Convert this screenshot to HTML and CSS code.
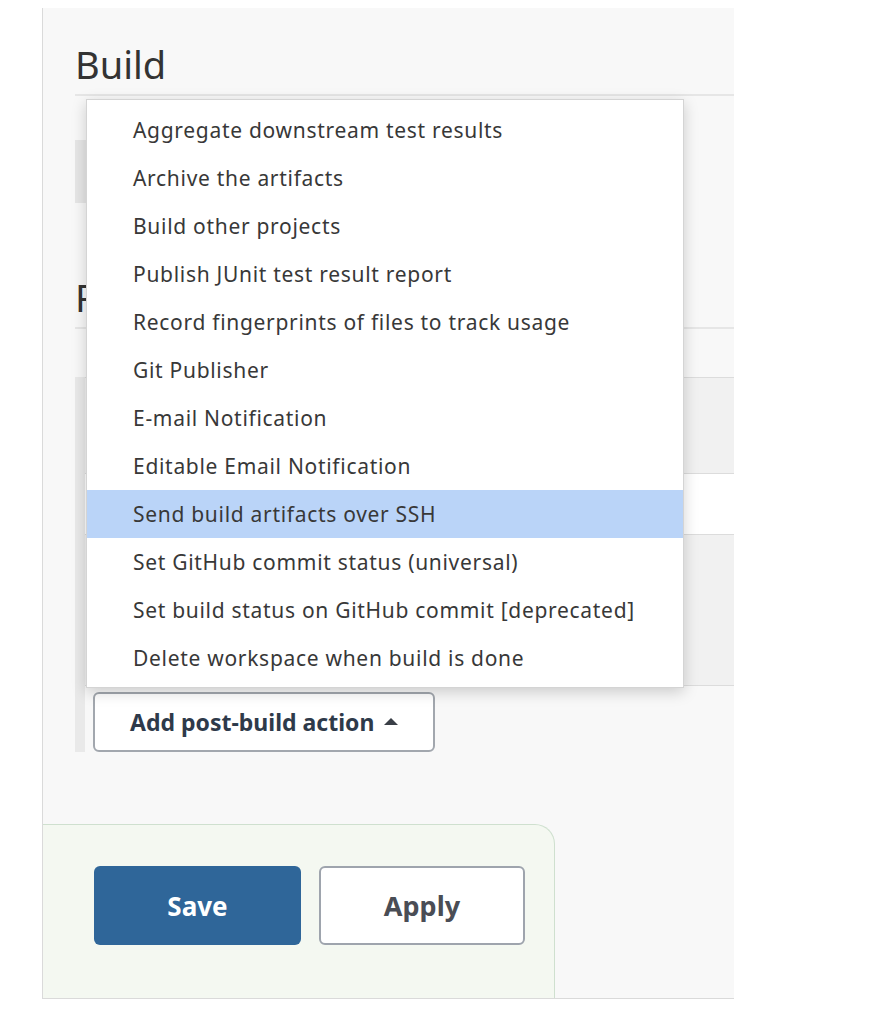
FILE: index.html
```html
<!DOCTYPE html>
<html lang="en">
<head>
<meta charset="utf-8">
<title>Configure</title>
<link rel="stylesheet" href="styles.css">
</head>
<body>
<div class="panel">
  <div class="content">
    <h2 class="section-title">Build</h2>
    <div class="build-step"></div>
    <h2 class="section-title post-title">Post-build Actions</h2>
    <div class="step-group">
      <div class="step-body">
        <div class="step-box">
          <div class="step-head"></div>
          <div class="step-field"></div>
          <div class="step-rest"></div>
        </div>
        <button class="add-btn" type="button">Add post-build action <span class="caret"></span></button>
      </div>
    </div>
  </div>

  <ul class="menu">
    <li class="menu-item">Aggregate downstream test results</li>
    <li class="menu-item">Archive the artifacts</li>
    <li class="menu-item">Build other projects</li>
    <li class="menu-item">Publish JUnit test result report</li>
    <li class="menu-item">Record fingerprints of files to track usage</li>
    <li class="menu-item">Git Publisher</li>
    <li class="menu-item">E-mail Notification</li>
    <li class="menu-item">Editable Email Notification</li>
    <li class="menu-item active">Send build artifacts over SSH</li>
    <li class="menu-item">Set GitHub commit status (universal)</li>
    <li class="menu-item">Set build status on GitHub commit [deprecated]</li>
    <li class="menu-item">Delete workspace when build is done</li>
  </ul>

  <div class="bottom-bar">
    <button class="btn btn-primary" type="button">Save</button>
    <button class="btn btn-secondary" type="button">Apply</button>
  </div>
</div>
</body>
</html>
```

FILE: styles.css
```css
html, body {
  margin: 0;
  padding: 0;
  background: #ffffff;
}

body {
  font-family: "Noto Sans", "Open Sans", sans-serif;
  color: #333333;
}

.panel {
  position: relative;
  box-sizing: border-box;
  margin: 8px 0 0 42px;
  width: 692px;
  height: 991px;
  background: #f8f8f8;
  border-left: 1px solid #dadada;
  border-bottom: 1px solid #dadada;
  display: flex;
  flex-direction: column;
}

.content {
  padding-left: 32px;
}

.section-title {
  margin: 32px 0 0 0;
  padding-bottom: 6px;
  font-size: 38px;
  line-height: 48px;
  font-weight: 400;
  color: #333333;
  border-bottom: 2px solid #e6e6e6;
  white-space: nowrap;
}

.build-step {
  margin-top: 44px;
  width: 220px;
  height: 63px;
  background: #e6e6e6;
}

.post-title {
  margin-top: 70px;
}

.step-group {
  margin-top: 48px;
  border-left: 10px solid #e9e9e9;
}

.step-body {
  display: flex;
  flex-direction: column;
  align-items: flex-start;
}

.step-box {
  align-self: stretch;
  border-top: 1px solid #dcdcdc;
  border-bottom: 1px solid #dcdcdc;
}

.step-head {
  height: 95px;
  background: #f1f1f1;
  border-bottom: 1px solid #dcdcdc;
}

.step-field {
  height: 60px;
  background: #ffffff;
  border-bottom: 1px solid #dcdcdc;
}

.step-rest {
  height: 150px;
  background: #f1f1f1;
}

.add-btn {
  margin: 6px 0 0 8px;
  box-sizing: border-box;
  width: 342px;
  height: 60px;
  background: #ffffff;
  border: 2px solid #a2a7ae;
  border-radius: 6px;
  font-family: "Noto Sans", "Open Sans", sans-serif;
  font-size: 23px;
  font-weight: 700;
  color: #2e3a4a;
  display: flex;
  align-items: center;
  gap: 10px;
  padding: 0 0 0 35px;
}

.caret {
  width: 0;
  height: 0;
  border-left: 7px solid transparent;
  border-right: 7px solid transparent;
  border-bottom: 7px solid #3a3f47;
  margin-top: -2px;
}

.menu {
  position: absolute;
  left: 43px;
  top: 91px;
  box-sizing: border-box;
  width: 598px;
  height: 589px;
  margin: 0;
  padding: 6px 0;
  list-style: none;
  background: #ffffff;
  border: 1px solid #d4d4d4;
  box-shadow: 0 4px 14px rgba(0, 0, 0, 0.18);
}

.menu-item {
  height: 48px;
  line-height: 48px;
  padding-left: 46px;
  font-size: 21px;
  letter-spacing: 0.7px;
  color: #383838;
  white-space: nowrap;
}

.menu-item.active {
  background: #bad4f8;
}

.bottom-bar {
  margin-top: auto;
  box-sizing: border-box;
  width: 512px;
  height: 174px;
  background: #f4f8f1;
  border-top: 1px solid #cfe0cf;
  border-right: 1px solid #cfe0cf;
  border-top-right-radius: 20px;
  display: flex;
  gap: 18px;
  padding: 41px 0 0 51px;
  align-items: flex-start;
}

.btn {
  box-sizing: border-box;
  width: 207px;
  height: 79px;
  border-radius: 6px;
  font-family: "Noto Sans", "Open Sans", sans-serif;
  font-size: 26px;
  font-weight: 700;
  padding: 0;
}

.btn-primary {
  background: #2f6699;
  color: #ffffff;
  border: none;
}

.btn-secondary {
  width: 206px;
  background: #ffffff;
  color: #4a4d55;
  border: 2px solid #9ea4ad;
  font-size: 27px;
}
```
